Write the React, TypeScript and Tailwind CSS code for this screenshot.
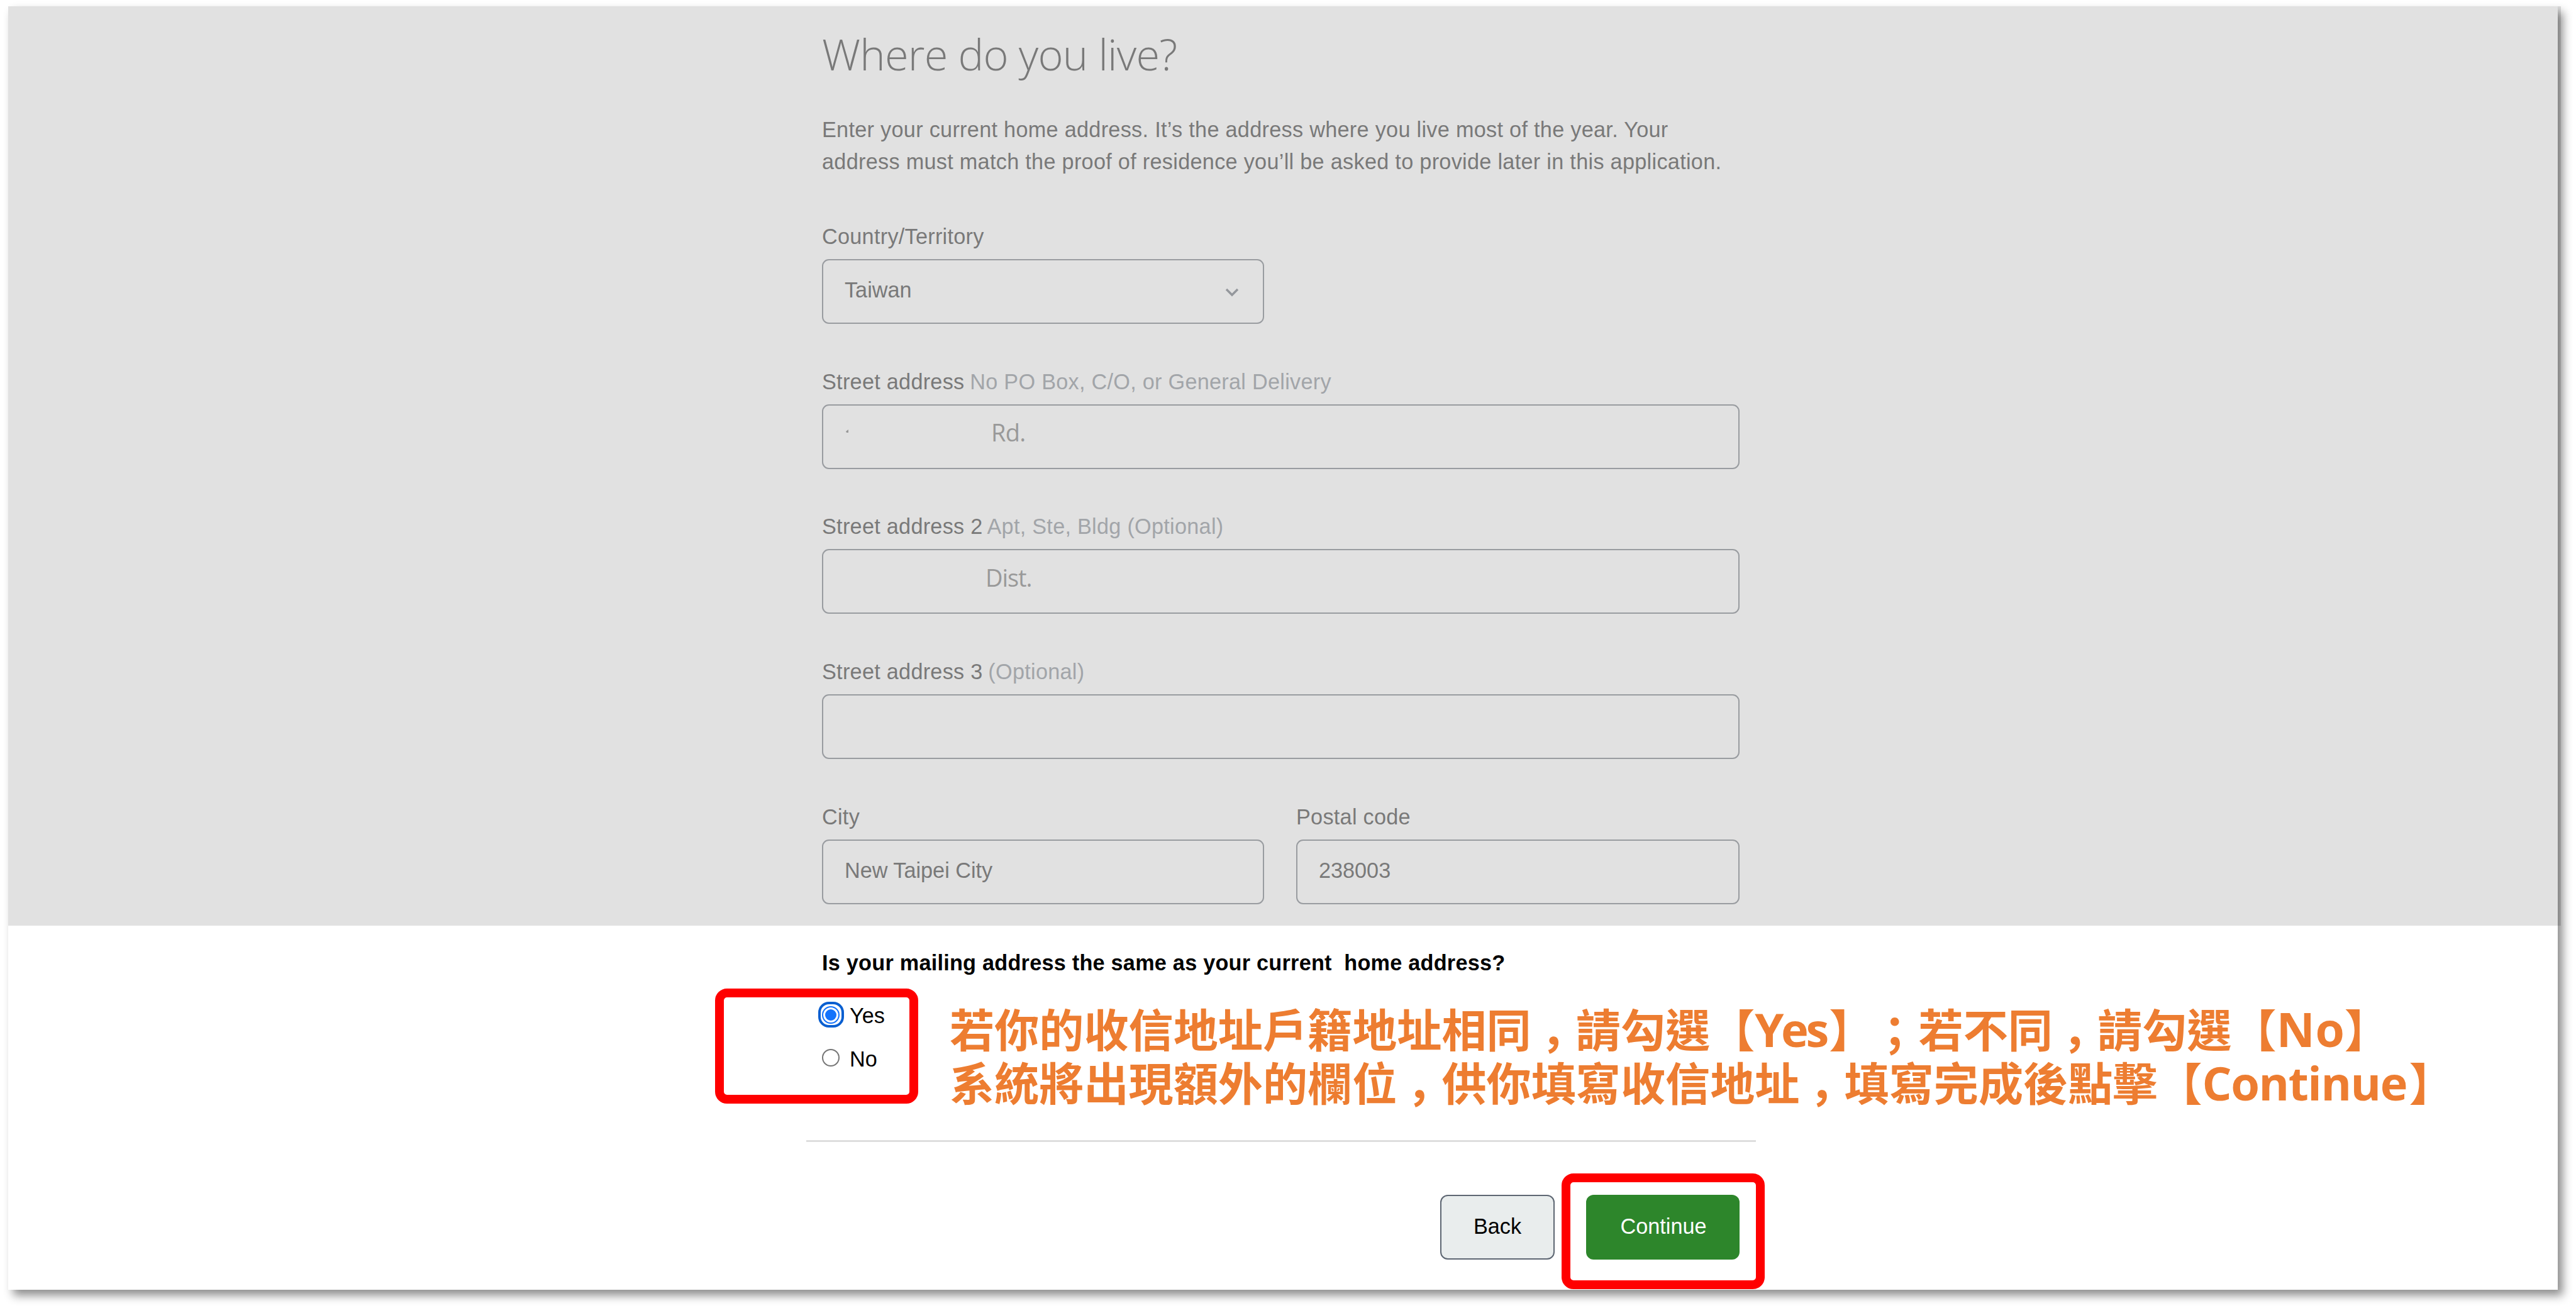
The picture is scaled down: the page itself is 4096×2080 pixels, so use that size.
import { useState } from 'react';
import type { ReactNode } from 'react';

type FieldProps = {
  label: string;
  hint?: string;
  children?: ReactNode;
};

function Field({ label, hint, children }: FieldProps) {
  return (
    <div>
      <label className="block mb-[10px] leading-[51px] tracking-[0.28px] whitespace-nowrap">
        {label}
        {hint && <span className="text-[#a2a5a9] -ml-px"> {hint}</span>}
      </label>
      <div className="relative flex items-center h-[103px] px-[34px] pb-[3px] border-2 border-[#999ca0] rounded-[11px]">
        {children}
      </div>
    </div>
  );
}

// The CJK punctuation sits in the middle of its square
function Mark({ children }: { children: string }) {
  return (
    <span className="relative left-[0.22em] font-['Noto_Sans_CJK_SC',sans-serif]" lang="zh-Hans">
      {children}
    </span>
  );
}

export default function App() {
  const [sameAddress, setSameAddress] = useState(true);

  const options = [
    { label: 'Yes', value: true },
    { label: 'No', value: false },
  ];

  return (
    <div className="relative w-[4096px] h-[2080px] overflow-hidden bg-white pl-[13px] pt-[10px] font-['Liberation_Sans',Arial,sans-serif] text-[34.23px] text-black">
      <div className="relative w-[4054px] h-[2041px] bg-white shadow-[8px_9px_14px_rgba(0,0,0,0.45)]">
        {/* Dimmed part of the form */}
        <section className="relative h-[1462px] bg-[#e1e1e1] pt-[31px] pl-[1294px] text-[#797979]">
          <div className="absolute top-0 -right-[5px] w-[5px] h-full bg-black/12"></div>
          <div className="w-[1459px]">
            <h1 className="font-['Open_Sans',sans-serif] font-light text-[68.5px] leading-[90px] tracking-[-0.8px]">
              Where do you live?
            </h1>
            <p className="mt-[49.5px] leading-[51px] tracking-[0.3px] whitespace-nowrap">
              Enter your current home address. It’s the address where you live most of the year. Your
              <br />
              address must match the proof of residence you’ll be asked to provide later in this application.
            </p>

            <div className="mt-[68.5px] flex flex-col gap-[66.7px]">
              <div className="w-[703px]">
                <Field label="Country/Territory">
                  <span>Taiwan</span>
                  <svg className="ml-auto mt-[5px] mr-[3px] w-[24px] h-[16px]" viewBox="0 0 24 16" fill="none" stroke="#94979c" strokeWidth="3.4">
                    <path d="M3 3l9 9 9-9" />
                  </svg>
                </Field>
              </div>
              <Field label="Street address" hint="No PO Box, C/O, or General Delivery">
                <svg className="absolute left-[36px] top-[38px] w-[5px] h-[6px]" viewBox="0 0 5 6">
                  <path d="M0 3L4 0V5H1z" fill="#999" />
                </svg>
                <span className="pl-[233px] pb-[10px] font-['Open_Sans',sans-serif] text-[38px] tracking-[-0.7px] text-[#999]">Rd.</span>
              </Field>
              <Field label="Street address 2" hint="Apt, Ste, Bldg (Optional)">
                <span className="pl-[224px] pb-[10px] font-['Open_Sans',sans-serif] text-[38px] tracking-[-1.1px] text-[#999]">Dist.</span>
              </Field>
              <Field label="Street address 3" hint="(Optional)" />
              <div className="grid grid-cols-[703px_1fr] gap-[51px]">
                <Field label="City">New Taipei City</Field>
                <Field label="Postal code">238003</Field>
              </div>
            </div>
          </div>
        </section>

        {/* Mailing address question */}
        <section className="pt-[33.5px] pl-[1294px]">
          <div className="w-[1459px]">
            <h2 className="font-bold leading-[51px] tracking-[0.25px] whitespace-pre">
              Is your mailing address the same as your current{'  '}home address?
            </h2>
            <div className="mt-[25px]">
              {options.map((option) => {
                const checked = option.value === sameAddress;
                return (
                  <label key={option.label} className="flex items-center gap-4 h-[68.5px]" onClick={() => setSameAddress(option.value)}>
                    <span
                      className={`relative flex items-center justify-center w-[28px] h-[28px] mb-[4px] rounded-full border-2 ${
                        checked ? 'border-[#1473fb]' : 'border-[#767676]'
                      }`}
                    >
                      {checked && (
                        <>
                          <span className="w-[18px] h-[18px] rounded-full bg-[#1473fb]"></span>
                          <span className="absolute -inset-[8.5px] rounded-[17px] border-[4.5px] border-[#0a5fd0]"></span>
                        </>
                      )}
                    </span>
                    {option.label}
                  </label>
                );
              })}
            </div>

            <hr className="mt-[94.5px] -ml-[25px] -mr-[26px] border-t-[3px] border-[#dedede]" />

            <div className="mt-[84px] flex justify-end gap-[50px]">
              <button className="w-[182px] h-[103px] pb-[2px] rounded-[12px] border-2 border-[#5d6672] bg-[#e9eded]">Back</button>
              <button className="w-[244px] h-[103px] pb-[2px] pl-[2px] rounded-[12px] bg-[#2d862b] text-white">Continue</button>
            </div>
          </div>
        </section>
      </div>

      {/* Annotations */}
      <div className="absolute left-[1136.5px] top-[1571.5px] w-[323px] h-[183.5px] border-[14px] border-[#ff0000] rounded-[19px]"></div>
      <div className="absolute left-[2482.5px] top-[1866px] w-[323px] h-[184px] border-[14px] border-[#ff0000] rounded-[19px]"></div>
      <div
        className="absolute left-[1510px] top-[1590.5px] font-['Noto_Sans_CJK_TC',sans-serif] font-bold text-[71.14px] leading-[85.3px] text-[#ed7d31] whitespace-nowrap [text-spacing-trim:space-all]"
        lang="zh-Hant"
      >
        <p>
          若你的收信地址戶籍地址相同<Mark>，</Mark>請勾選【
          <span className="inline-block w-[118px] leading-none font-['Open_Sans',sans-serif] text-[74px] tracking-[-4.4px]">Yes</span>
          】<Mark>；</Mark>若不同<Mark>，</Mark>請勾選【
          <span className="inline-block w-[108px] leading-none font-['Open_Sans',sans-serif] text-[75px] tracking-[1px]">No</span>】
        </p>
        <p>
          系統將出現額外的欄位<Mark>，</Mark>供你填寫收信地址<Mark>，</Mark>填寫完成後點擊【
          <span className="inline-block w-[329px] leading-none font-['Open_Sans',sans-serif] text-[74px] tracking-[-1.5px]">Continue</span>】
        </p>
      </div>
    </div>
  );
}
